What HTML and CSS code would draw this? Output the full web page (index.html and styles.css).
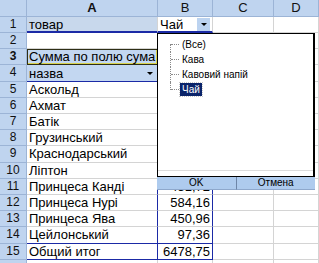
FILE: index.html
```html
<!DOCTYPE html>
<html>
<head>
<meta charset="utf-8">
<link rel="stylesheet" href="styles.css">
</head>
<body>
<div class="wrap">
  <div class="sheet">
    <div class="corner"></div>
    <div class="colhead sel">A</div>
    <div class="colhead">B</div>
    <div class="colhead">C</div>
    <div class="colhead">D</div>

    <div class="rowhead">1</div>
    <div class="cell field page pv-line">товар</div>
    <div class="cell pv-line split">Чай<span class="drop btn-drop"></span></div>
    <div class="cell"></div>
    <div class="cell"></div>

    <div class="rowhead">2</div>
    <div class="cell"></div>
    <div class="cell"></div>
    <div class="cell"></div>
    <div class="cell"></div>

    <div class="rowhead sel">3</div>
    <div class="cell field active">Сумма по полю сума</div>
    <div class="cell"></div>
    <div class="cell"></div>
    <div class="cell"></div>

    <div class="rowhead">4</div>
    <div class="cell field split pv-b pv-r">назва<span class="drop"></span></div>
    <div class="cell pv-b pv-r"></div>
    <div class="cell"></div>
    <div class="cell"></div>

    <div class="rowhead">5</div>
    <div class="cell pv-r">Аскольд</div>
    <div class="cell num pv-r"></div>
    <div class="cell"></div>
    <div class="cell"></div>

    <div class="rowhead">6</div>
    <div class="cell pv-r">Ахмат</div>
    <div class="cell num pv-r"></div>
    <div class="cell"></div>
    <div class="cell"></div>

    <div class="rowhead">7</div>
    <div class="cell pv-r">Батік</div>
    <div class="cell num pv-r"></div>
    <div class="cell"></div>
    <div class="cell"></div>

    <div class="rowhead">8</div>
    <div class="cell pv-r">Грузинський</div>
    <div class="cell num pv-r"></div>
    <div class="cell"></div>
    <div class="cell"></div>

    <div class="rowhead">9</div>
    <div class="cell pv-r">Краснодарський</div>
    <div class="cell num pv-r"></div>
    <div class="cell"></div>
    <div class="cell"></div>

    <div class="rowhead">10</div>
    <div class="cell pv-r">Ліптон</div>
    <div class="cell num pv-r"></div>
    <div class="cell"></div>
    <div class="cell"></div>

    <div class="rowhead">11</div>
    <div class="cell pv-r">Принцеса Канді</div>
    <div class="cell num pv-r">431,72</div>
    <div class="cell"></div>
    <div class="cell"></div>

    <div class="rowhead">12</div>
    <div class="cell pv-r">Принцеса Нурі</div>
    <div class="cell num pv-r">584,16</div>
    <div class="cell"></div>
    <div class="cell"></div>

    <div class="rowhead">13</div>
    <div class="cell pv-r">Принцеса Ява</div>
    <div class="cell num pv-r">450,96</div>
    <div class="cell"></div>
    <div class="cell"></div>

    <div class="rowhead">14</div>
    <div class="cell pv-r pv-b">Цейлонський</div>
    <div class="cell num pv-r pv-b">97,36</div>
    <div class="cell"></div>
    <div class="cell"></div>

    <div class="rowhead">15</div>
    <div class="cell pv-r pv-b">Общий итог</div>
    <div class="cell num pv-r pv-b">6478,75</div>
    <div class="cell"></div>
    <div class="cell"></div>

    <div class="rowhead"></div>
    <div class="cell"></div>
    <div class="cell"></div>
    <div class="cell"></div>
    <div class="cell"></div>
  </div>

  <div class="dropdown">
    <div class="list">
      <div class="items">
        <div class="item first"><span class="tree"></span><span class="label">(Все)</span></div>
        <div class="item"><span class="tree"></span><span class="label">Кава</span></div>
        <div class="item"><span class="tree"></span><span class="label">Кавовий напій</span></div>
        <div class="item last"><span class="tree"></span><span class="label selected">Чай</span></div>
      </div>
    </div>
    <div class="buttons">
      <div class="btn ok">OK</div>
      <div class="btn">Отмена</div>
    </div>
  </div>
</div>
</body>
</html>
```

FILE: styles.css
```css
body{
    margin: 0;
    background: #fff;
    font-family: "Liberation Sans", Arial, sans-serif;
}
.wrap{
    position: relative;
    width: 319px;
    height: 263px;
    overflow: hidden;
}
.sheet{
    display: grid;
    grid-template-columns: 27px 131px 55px 61px 45px;
    grid-template-rows: 17px 16px 16px 16px 17px 16px 16px 16px 16px 17px 16px 16px 16px 16px 17px 16px 16px;
}
.sheet > div{
    box-sizing: border-box;
    border-right: 1px solid #d4d4d4;
    border-bottom: 1px solid #d4d4d4;
    white-space: nowrap;
    overflow: hidden;
}
.corner,
.colhead,
.rowhead{
    background: #bfd4ef;
    color: #111;
}
.sheet > .corner,
.sheet > .colhead,
.sheet > .rowhead{
    border-right-color: #9cb4d6;
    border-bottom-color: #9cb4d6;
}
.colhead{
    text-align: center;
    font-size: 13px;
    line-height: 16px;
}
.rowhead{
    text-align: center;
    font-size: 12px;
    line-height: 15px;
}
.sel{
    font-weight: bold;
}
.cell{
    font-size: 13px;
    line-height: 15px;
    padding: 0 2px;
    color: #000;
}
.num{
    text-align: right;
}
.field{
    background: #c3d7f1;
}
.page{
    background: #c8d8ec;
}
.split{
    display: flex;
    justify-content: space-between;
    align-items: center;
}
.sheet > .pv-line{
    border-bottom: 2px solid #1b2aa6;
}
.sheet > .pv-b{
    border-bottom-color: #1b2aa6;
}
.sheet > .pv-r{
    border-right-color: #1b2aa6;
}
.sheet > .active{
    border: 1px solid #2e2e14;
    box-shadow: inset -1px -1px 0 #d9d34a;
    line-height: 13px;
    padding-left: 1px;
}
.drop{
    width: 13px;
    height: 13px;
    display: flex;
    align-items: center;
    justify-content: center;
    margin-right: -1px;
}
.drop::after{
    content: '';
    border-left: 3px solid transparent;
    border-right: 3px solid transparent;
    border-top: 3px solid #000;
    margin-top: 1px;
}
.btn-drop{
    background: #bcd3f0;
    margin-right: 0;
}

/* filter popup */
.dropdown{
    position: absolute;
    left: 157px;
    top: 33px;
    width: 158px;
    height: 157px;
    display: flex;
    flex-direction: column;
    font-size: 10px;
}
.list{
    flex: 1;
    display: flex;
    flex-direction: column;
    background: #fff;
    border: 1px solid #000;
    border-right-width: 2px;
}
.items{
    flex: 1;
    padding-top: 3px;
    margin-bottom: 5px;
    border-bottom: 1px solid #dcdcdc;
}
.item{
    height: 15px;
    display: flex;
    align-items: center;
    padding-left: 12px;
    color: #000;
}
.tree{
    align-self: stretch;
    width: 8px;
    border-left: 1px dotted #8a8a8a;
    display: flex;
    align-items: center;
}
.tree::after{
    content: '';
    width: 8px;
    border-top: 1px dotted #8a8a8a;
}
.item.first .tree{
    align-self: flex-end;
    height: 8px;
    align-items: flex-start;
}
.item.last .tree{
    align-self: flex-start;
    height: 8px;
    align-items: flex-end;
}
.label{
    line-height: 13px;
    padding: 0 2px;
    margin-left: 1px;
}
.selected{
    background: #0a246a;
    color: #fff;
    outline: 1px dotted #c8c8c8;
}
.buttons{
    height: 13px;
    display: flex;
}
.btn{
    flex: 1;
    background: #aecbee;
    text-align: center;
    line-height: 12px;
    color: #000;
    border-bottom: 1px solid #8ea8cc;
}
.ok{
    border-right: 1px solid #6e86a8;
}
```
